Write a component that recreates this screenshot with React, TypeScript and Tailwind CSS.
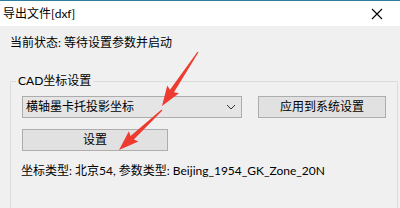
import React from "react";

const font = "font-['Lato','Noto_Sans_CJK_SC',sans-serif]";

function arrowPoints(tx: number, ty: number, px: number, py: number) {
  const dx = px - tx;
  const dy = py - ty;
  const len = Math.hypot(dx, dy);
  const ux = dx / len;
  const uy = dy / len;
  const nx = -uy;
  const ny = ux;
  const headLen = 18;
  const bx = px - ux * headLen;
  const by = py - uy * headLen;
  const pts: [number, number][] = [
    [tx + nx * 0.6, ty + ny * 0.6],
    [bx + nx * 2.4, by + ny * 2.4],
    [bx - ux * 2 + nx * 7, by - uy * 2 + ny * 7],
    [px, py],
    [bx - ux * 2 - nx * 7, by - uy * 2 - ny * 7],
    [bx - nx * 2.4, by - ny * 2.4],
    [tx - nx * 0.6, ty - ny * 0.6],
  ];
  return pts.map((p) => p.join(",")).join(" ");
}

export default function App() {
  return (
    <div
      className={`relative h-[208px] w-[400px] overflow-hidden bg-[#f0f0f0] text-[12px] leading-[16px] text-black ${font}`}
    >
      <div className="h-px bg-[#2f7f9c]" />
      <div className="flex h-[25px] items-center justify-between bg-white pl-[3px]">
        <span>导出文件[dxf]</span>
        <div className="flex h-[25px] w-[46px] items-center justify-center">
          <svg width="12" height="12" viewBox="0 0 12 12">
            <path d="M1 1L11 11M11 1L1 11" stroke="#000" strokeWidth="1.1" />
          </svg>
        </div>
      </div>

      <div className="px-[10px] pt-[9px]">
        <div>当前状态: 等待设置参数并启动</div>

        <fieldset className="mt-[22px] h-[200px] w-[383px] border border-[#dcdcdc] px-[11px] pt-[7px]">
          <legend className="ml-[-6px] px-[2px]">CAD坐标设置</legend>
          <div className="flex gap-[16px]">
            <div className="flex h-[22px] w-[220px] items-center justify-between border border-[#acacac] bg-[#e5e5e5] pl-[3px] pr-[5px]">
              <span>横轴墨卡托投影坐标</span>
              <svg width="10" height="6" viewBox="0 0 10 6">
                <path d="M1 1L5 5L9 1" stroke="#333" strokeWidth="1" fill="none" />
              </svg>
            </div>
            <button className="flex h-[22px] w-[128px] items-center justify-center border border-[#adadad] bg-[#e1e1e1]">
              应用到系统设置
            </button>
          </div>
          <button className="mt-[11px] flex h-[22px] w-[146px] items-center justify-center border border-[#adadad] bg-[#e1e1e1]">
            设置
          </button>
          <div className="mt-[12px] ml-[-1px]">
            坐标类型: 北京54, 参数类型: Beijing_1954_GK_Zone_20N
          </div>
        </fieldset>
      </div>

      <svg className="pointer-events-none absolute inset-0" width="400" height="208">
        <polygon points={arrowPoints(198, 52, 162, 106)} fill="#ee3b2f" />
        <polygon points={arrowPoints(162, 110, 119, 150)} fill="#ee3b2f" />
      </svg>
    </div>
  );
}
